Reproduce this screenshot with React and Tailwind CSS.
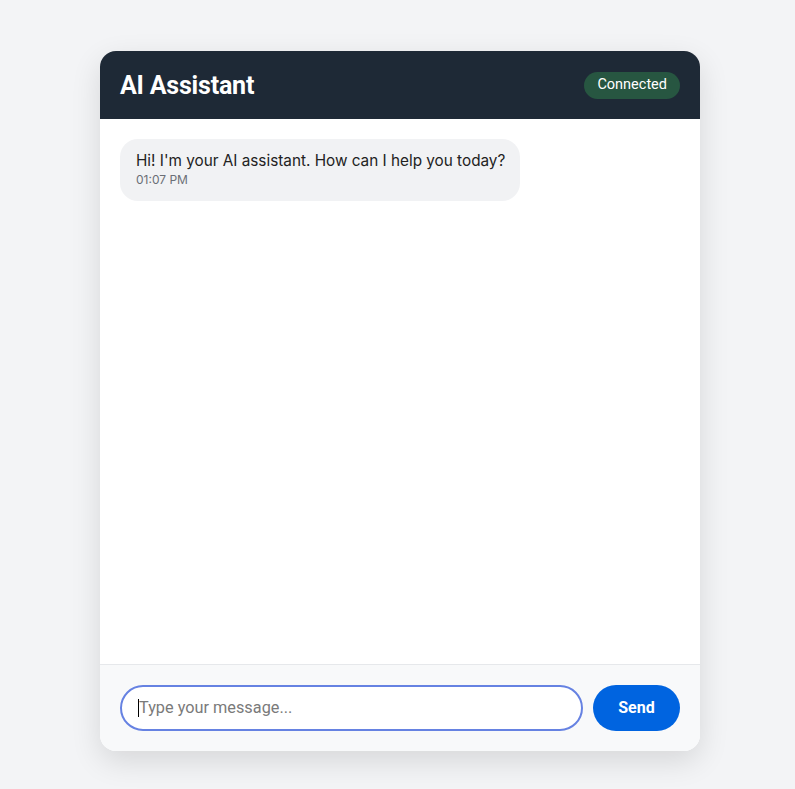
export default function App() {
  return (
    <div className="min-h-[789px] bg-[#f3f4f6] flex justify-center pt-[51px] pl-[5px]" style={{ fontFamily: "Inter, 'Noto Sans', sans-serif" }}>
      <div className="w-[600px] h-[700px] bg-white rounded-2xl shadow-[0_10px_30px_rgba(0,0,0,0.12)] flex flex-col overflow-hidden">
        <div className="h-[68px] bg-[#1e2936] flex items-center justify-between px-5 shrink-0">
          <h1 className="text-white text-[25px] font-bold tracking-[-0.2px] leading-none" style={{ fontFamily: "Roboto, sans-serif" }}>AI Assistant</h1>
          <span className="bg-[#275641] text-white text-[14.5px] rounded-full px-[13px] h-[27px] flex items-center" style={{ fontFamily: "Roboto, sans-serif" }}>Connected</span>
        </div>
        <div className="flex-1 p-5">
          <div className="w-[400px] bg-[#f1f2f4] rounded-[18px] px-4 pt-[12px] pb-[13px]">
            <p className="text-[#222] text-[15.3px] leading-[20px] whitespace-nowrap">Hi! I'm your AI assistant. How can I help you today?</p>
            <p className="text-[#6b6f76] text-[12px] leading-[16px] mt-[1px]">01:07 PM</p>
          </div>
        </div>
        <div className="h-[87px] shrink-0 bg-[#f8f9fa] border-t border-[#e6e8eb] flex items-center px-5 gap-[10px]">
          <div className="flex-1 h-[46px] rounded-full border-2 border-[#6682e2] bg-white flex items-center pl-[16px]">
            <span className="w-px h-[18px] bg-black"></span>
            <span className="text-[#7a7a7a] text-[16.3px]" style={{ fontFamily: "Roboto, sans-serif" }}>Type your message...</span>
          </div>
          <button className="w-[87px] h-[46px] rounded-full bg-[#0064e0] text-white text-[16px] font-bold" style={{ fontFamily: "Roboto, sans-serif" }}>Send</button>
        </div>
      </div>
    </div>
  );
}
